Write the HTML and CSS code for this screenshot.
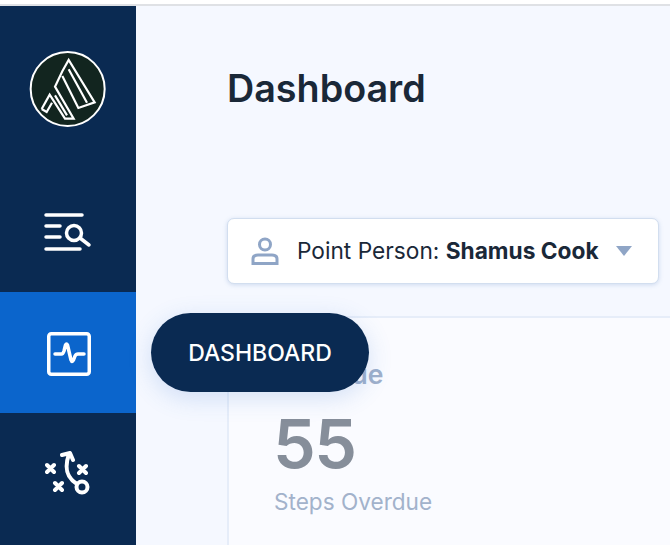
FILE: index.html
```html
<!DOCTYPE html>
<html lang="en">
<head>
  <meta charset="UTF-8">
  <title>Dashboard</title>
  <link rel="stylesheet" href="styles.css">
</head>
<body>

<div class="top-strip"></div>

<div class="app">
  <nav class="sidebar">
    <div class="logo-wrap">
      <svg class="logo" width="78" height="78" viewBox="88 148 234 234">
        <circle cx="204" cy="265" r="111" fill="#12251f" stroke="#fff" stroke-width="6"/>
        <path d="M126 325L150 282L196 354L222 354L166 258L188 212L207 178L285 305L236 322L188 226M207 206L262 306M126 325L141 334L157 306M166 284L202 344" fill="none" stroke="#fff" stroke-width="6.500" stroke-linejoin="miter"/>
      </svg>
    </div>
    <a class="nav-item">
      <svg width="48" height="40" viewBox="0 0 48 40" fill="none" stroke="#fff" stroke-width="3.500" stroke-linecap="round">
        <path d="M2 3H38M2 14H16M2 25H16M2 37H36"/>
        <circle cx="30" cy="21" r="7.500"/>
        <path d="M36 26L45 33"/>
      </svg>
    </a>
    <a class="nav-item active">
      <svg class="pulse" width="44" height="44" viewBox="0 0 44 44" fill="none" stroke="#fff" stroke-width="3.500" stroke-linecap="round" stroke-linejoin="round">
        <rect x="1.750" y="1.750" width="40.500" height="40.500" rx="2.500"/>
        <path d="M8 22H14.500Q16 22 17 19L18.500 13Q19.500 11 20.500 13L24 28Q25 31 26.500 28L28 24Q29 22 31 22H37"/>
      </svg>
    </a>
    <a class="nav-item">
      <svg width="46" height="46" viewBox="0 0 46 46" fill="none" stroke="#fff" stroke-width="4" stroke-linecap="round" stroke-linejoin="round">
        <path d="M2 14L9 21M9 14L2 21M34 15L41 22M41 15L34 22M10 32L17 39M17 32L10 39"/>
        <circle cx="37" cy="36" r="5.500"/>
        <path d="M32 33C24 28 18 20 24 3M17 4L25 2L28 9"/>
      </svg>
    </a>
  </nav>

  <main class="content">
    <h1>Dashboard</h1>

    <div class="person-select">
      <svg width="30" height="28" viewBox="0 0 30 28" fill="none" stroke="#8fa5c6" stroke-width="3">
        <circle cx="15" cy="7.500" r="5.500"/>
        <path d="M3 26.500V22Q3 18 8 18H22Q27 18 27 22V26.500Z"/>
      </svg>
      <span class="person-label">Point Person: <strong>Shamus Cook</strong></span>
      <span class="caret"></span>
    </div>

    <section class="card">
      <h2>Overdue</h2>
      <div class="big-number">55</div>
      <div class="card-label">Steps Overdue</div>
    </section>
  </main>
</div>

<div class="tooltip">DASHBOARD</div>

</body>
</html>
```

FILE: styles.css
```css
html, body {
  height: 100%;
}
body {
  font-family: Inter, 'Noto Sans', sans-serif;
  background-color: #f5f8ff;
  margin: 0;
  overflow: hidden;
  color: #1a2838;
}
.top-strip {
  height: 4px;
  background: #fff;
  border-bottom: 2px solid #dfe1e5;
}
.app {
  display: flex;
  height: 539px;
  overflow: hidden;
}
.sidebar {
  width: 136px;
  flex-shrink: 0;
  background-color: #0a2a52;
}
.logo-wrap {
  height: 165px;
  padding-top: 44px;
  box-sizing: border-box;
  display: flex;
  justify-content: center;
}
.nav-item {
  height: 121px;
  display: flex;
  align-items: center;
  justify-content: center;
}
.nav-item.active {
  background-color: #0b65cc;
}
.pulse {
  margin: 2px 0 0 2px;
}
.content {
  flex: 1;
  padding: 0 0 0 91px;
}
h1 {
  font-size: 37.700px;
  font-weight: 600;
  line-height: 44px;
  margin: 60px 0 0;
}
.person-select {
  width: 432px;
  height: 66px;
  box-sizing: border-box;
  margin-top: 108px;
  padding: 0 26px 0 22px;
  display: flex;
  align-items: center;
  background: #fff;
  border: 1px solid #d2deef;
  border-radius: 7px;
  box-shadow: 0 1px 4px rgba(90,130,190,0.25);
}
.person-label {
  font-size: 22.700px;
  margin-left: 17px;
  padding-bottom: 2px;
  white-space: nowrap;
}
.person-label strong {
  font-weight: 700;
}
.caret {
  margin-left: auto;
  width: 0;
  height: 0;
  border-left: 8px solid transparent;
  border-right: 8px solid transparent;
  border-top: 10px solid #8fa5c6;
}
.card {
  margin-top: 32px;
  height: 229px;
  box-sizing: border-box;
  padding: 40px 45px;
  background: #fafbff;
  border-top: 2px solid #e6edf9;
  border-left: 2px solid #e6edf9;
}
h2 {
  font-size: 26.500px;
  font-weight: 600;
  line-height: 32px;
  margin: 0;
  color: #9fb0cb;
}
.big-number {
  font-size: 68px;
  font-weight: 600;
  letter-spacing: -1.500px;
  line-height: 80px;
  margin: 13px 0 0 -1px;
  color: #868e9a;
}
.card-label {
  font-size: 22.600px;
  line-height: 28px;
  margin-top: 5px;
  color: #a2b2cb;
}
.tooltip {
  position: absolute;
  left: 151px;
  top: 313px;
  width: 218px;
  height: 79px;
  display: flex;
  align-items: center;
  justify-content: center;
  background-color: #0a2a52;
  border-radius: 40px;
  color: #fff;
  font-size: 23px;
  font-weight: 500;
  box-shadow: 0 6px 24px rgba(60,120,210,0.2);
}
```
